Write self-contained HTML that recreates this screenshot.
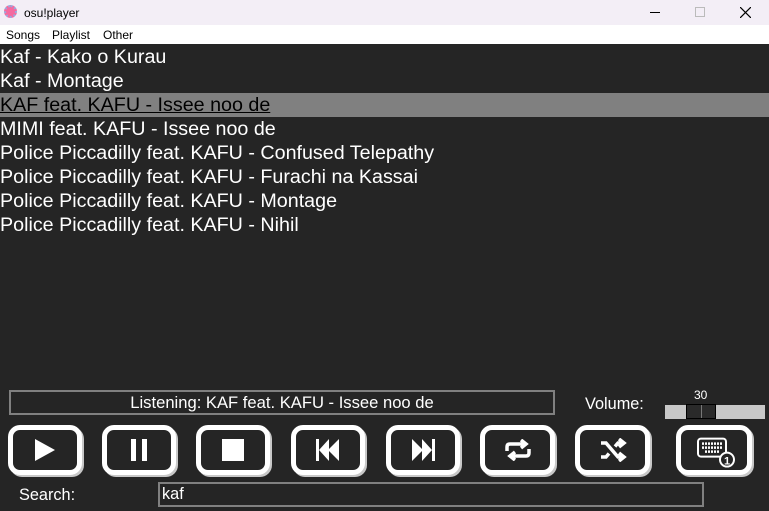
<!DOCTYPE html>
<html><head><style>
*{margin:0;padding:0;box-sizing:border-box}
body{width:769px;height:511px;background:#252525;font-family:"Liberation Sans",sans-serif;position:relative;overflow:hidden}
.title{position:absolute;left:0;top:0;width:769px;height:25px;background:#f3eef6;font-size:12px;color:#000}
.menu{position:absolute;left:0;top:25px;width:769px;height:19px;background:#fff;font-size:12px;color:#000}
.menu span{position:absolute;top:3px}
.row{position:absolute;left:0;width:769px;height:24px;color:#fff;font-size:19.7px;line-height:24px}
.sel{background:#808080;color:#000;text-decoration:underline}
.box{position:absolute;border:2px solid #808080}
.btn{position:absolute;top:425px;height:50px;border:5px solid #fff;border-radius:12px;box-shadow:2px 2px 0 #c8c8c8;background:#252525}
.btn svg{position:absolute;left:50%;top:50%;transform:translate(-50%,-50%)}
</style></head><body>
<div class="title">
<div style="position:absolute;left:4px;top:5px;width:13px;height:13px;border-radius:50%;background:#f46aa0;border:2px dotted #9ad"></div>
<span style="position:absolute;left:24px;top:6px">osu!player</span>
<div style="position:absolute;left:650px;top:12px;width:10px;height:1px;background:#000"></div>
<div style="position:absolute;left:695px;top:7px;width:10px;height:10px;border:1px solid #bbb"></div>
<svg style="position:absolute;left:740px;top:7px" width="11" height="11"><path d="M0 0L11 11M11 0L0 11" stroke="#000" stroke-width="1.2"/></svg>
</div>
<div class="menu"><span style="left:6px">Songs</span><span style="left:52px">Playlist</span><span style="left:103px">Other</span></div>
<div class="row" style="top:45px">Kaf - Kako o Kurau</div>
<div class="row" style="top:69px">Kaf - Montage</div>
<div class="row sel" style="top:93px">KAF feat. KAFU - Issee noo de</div>
<div class="row" style="top:117px">MIMI feat. KAFU - Issee noo de</div>
<div class="row" style="top:141px">Police Piccadilly feat. KAFU - Confused Telepathy</div>
<div class="row" style="top:165px">Police Piccadilly feat. KAFU - Furachi na Kassai</div>
<div class="row" style="top:189px">Police Piccadilly feat. KAFU - Montage</div>
<div class="row" style="top:213px">Police Piccadilly feat. KAFU - Nihil</div>
<div class="box" style="left:9px;top:390px;width:546px;height:25px;color:#fff;font-size:16.6px;text-align:center;line-height:21px">Listening: KAF feat. KAFU - Issee noo de</div>
<div style="position:absolute;left:585px;top:395px;color:#fff;font-size:16.3px">Volume:</div>
<div style="position:absolute;left:694px;top:388px;color:#fff;font-size:12px">30</div>
<div style="position:absolute;left:665px;top:405px;width:100px;height:14px;background:#c8c8c8"></div>
<div style="position:absolute;left:686px;top:404px;width:30px;height:15px;background:#2a2a2a;border:1px solid #000"><div style="position:absolute;left:14px;top:0;width:1px;height:13px;background:#777"></div></div>
<div class="btn" style="left:8px;width:74px"><svg width="24" height="24"><path d="M2 1L22 12L2 23Z" fill="#fff"/></svg></div>
<div class="btn" style="left:102px;width:74px"><svg width="20" height="22"><rect x="2" y="0" width="5" height="22" fill="#fff"/><rect x="13" y="0" width="5" height="22" fill="#fff"/></svg></div>
<div class="btn" style="left:196px;width:74px"><svg width="22" height="22"><rect width="22" height="22" fill="#fff"/></svg></div>
<div class="btn" style="left:291px;width:74px"><svg width="24" height="22"><rect x="0" y="0" width="3" height="22" fill="#fff"/><path d="M3 11L13 0V22ZM12 11L23 0V22Z" fill="#fff"/></svg></div>
<div class="btn" style="left:386px;width:74px"><svg width="24" height="22"><rect x="21" y="0" width="3" height="22" fill="#fff"/><path d="M21 11L11 0V22ZM12 11L1 0V22Z" fill="#fff"/></svg></div>
<div class="btn" style="left:480px;width:75px"><svg width="28" height="22"><path d="M3 12V8Q3 5 6 5H21M17 1L22 5L17 9M25 10V14Q25 17 22 17H7M11 13L6 17L11 21" stroke="#fff" stroke-width="3.5" fill="none"/></svg></div>
<div class="btn" style="left:575px;width:75px"><svg width="28" height="24"><path d="M2 5H7L19 19H24M2 19H7L10 15.5M16 8.5L19 5H24M20 1L25 5L20 9M20 15L25 19L20 23" stroke="#fff" stroke-width="3.5" fill="none"/></svg></div>
<div class="btn" style="left:676px;width:76px"><svg width="40" height="32" style="transform:translate(-45%,-45%)"><rect x="2" y="3" width="28" height="18" rx="3" stroke="#fff" stroke-width="2" fill="none"/><path d="M6 8H26M6 12H26M9 16H23" stroke="#fff" stroke-width="2.5" stroke-dasharray="2 1"/><circle cx="31" cy="24" r="7" fill="#252525" stroke="#fff" stroke-width="2"/><text x="28" y="29" fill="#fff" font-size="11" font-weight="bold" font-family="Liberation Sans">1</text></svg></div>
<div style="position:absolute;left:19px;top:486px;color:#fff;font-size:16.3px">Search:</div>
<div class="box" style="left:158px;top:482px;width:546px;height:25px;color:#fff;font-size:16.3px;line-height:21px;padding-left:2px">kaf</div>
</body></html>
